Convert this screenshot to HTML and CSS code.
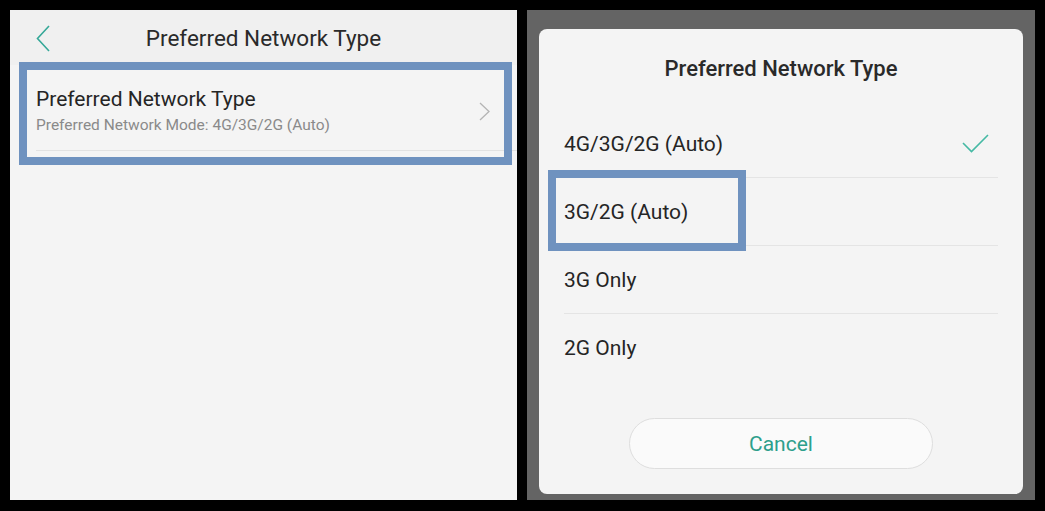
FILE: index.html
```html
<!DOCTYPE html>
<html lang="en">
<head>
    <meta charset="UTF-8">
    <meta name="viewport" content="width=device-width, initial-scale=1.0">
    <title>Preferred Network Type</title>
    <link rel="stylesheet" href="styles.css">
</head>
<body>
    <div class="frames">
        <!-- Settings screen -->
        <div class="screen">
            <div class="topbar">
                <span class="back">
                    <svg width="14" height="27" viewBox="0 0 14 27"><path d="M13 1 L1.5 13.5 L13 26" fill="none" stroke="#35a898" stroke-width="1.6"/></svg>
                </span>
                <h1>Preferred Network Type</h1>
                <span></span>
            </div>
            <div class="pref-item">
                <div class="pref-text">
                    <div class="pref-title">Preferred Network Type</div>
                    <div class="pref-sub">Preferred Network Mode: 4G/3G/2G (Auto)</div>
                </div>
                <svg class="chevron" width="11" height="19" viewBox="0 0 11 19"><path d="M1 1 L10 9.5 L1 18" fill="none" stroke="#b4b4b4" stroke-width="1.3"/></svg>
            </div>
            <div class="mark mark-item"></div>
        </div>

        <!-- Dialog screen -->
        <div class="screen dim">
            <div class="dialog">
                <h2>Preferred Network Type</h2>
                <ul class="options">
                    <li class="option selected">
                        <span>4G/3G/2G (Auto)</span>
                        <svg width="27" height="19" viewBox="0 0 27 19"><path d="M1 9 L9.5 17.5 L26 1" fill="none" stroke="#45b9a4" stroke-width="1.6"/></svg>
                    </li>
                    <li class="option"><span>3G/2G (Auto)</span></li>
                    <li class="option"><span>3G Only</span></li>
                    <li class="option"><span>2G Only</span></li>
                </ul>
                <button class="cancel">Cancel</button>
                <div class="mark mark-option"></div>
            </div>
        </div>
    </div>
</body>
</html>
```

FILE: styles.css
```css
body {
    margin: 0;
    background: #000;
    font-family: Roboto, "Liberation Sans", sans-serif;
    color: #252525;
}

.frames {
    display: flex;
    gap: 10px;
    padding: 10px;
}

.screen {
    position: relative;
    width: 507px;
    height: 490px;
    background: #f4f4f4;
}

/* top bar */
.topbar {
    display: grid;
    grid-template-columns: 70px 1fr 70px;
    align-items: center;
    height: 55px;
    background: #f0f0f0;
}

.back {
    display: flex;
    padding-left: 26px;
    padding-top: 1px;
}

.topbar h1 {
    margin: 0;
    text-align: center;
    font-size: 22.5px;
    font-weight: 400;
    color: #2a2a2a;
}

/* list item */
.pref-item {
    display: flex;
    align-items: center;
    margin-left: 26px;
    padding: 22px 27px 15px 0;
    border-bottom: 1px solid #e2e2e2;
}

.pref-text {
    flex: 1;
}

.pref-title {
    font-size: 21px;
    line-height: 25px;
}

.pref-sub {
    margin-top: 3px;
    font-size: 15.5px;
    line-height: 20px;
    color: #8a8a8a;
}

/* annotation boxes */
.mark {
    position: absolute;
    box-sizing: border-box;
    border: 8px solid #6f92bf;
}

.mark-item {
    left: 9px;
    top: 52px;
    width: 493px;
    height: 103px;
}

.mark-option {
    left: 9px;
    top: 141px;
    width: 198px;
    height: 81px;
}

/* dialog */
.screen.dim {
    width: 508px;
    background: #646464;
    padding: 19px 12px 0;
    box-sizing: border-box;
}

.dialog {
    position: relative;
    display: flex;
    flex-direction: column;
    height: 465px;
    background: #f4f4f4;
    border-radius: 8px;
}

.dialog h2 {
    margin: 27px 0 0;
    text-align: center;
    font-size: 22px;
    line-height: 26px;
    font-weight: 500;
    color: #2a2a2a;
}

.options {
    list-style: none;
    margin: 28px 25px 0;
    padding: 0;
}

.option {
    display: flex;
    align-items: center;
    justify-content: space-between;
    height: 67px;
    padding-right: 9px;
    border-bottom: 1px solid #e4e4e4;
    font-size: 21px;
}

.option:last-child {
    border-bottom: none;
}

.cancel {
    align-self: center;
    width: 304px;
    height: 51px;
    margin: auto 0 25px;
    background: #fafafa;
    border: 1px solid #dedede;
    border-radius: 26px;
    font-family: inherit;
    font-size: 21px;
    color: #2d9f8c;
}
```
